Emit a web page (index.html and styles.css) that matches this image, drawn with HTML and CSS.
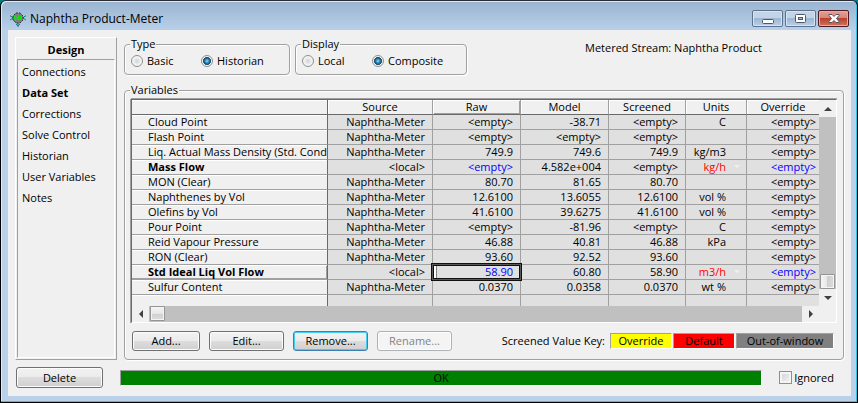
FILE: index.html
```html
<!DOCTYPE html>
<html lang="en">
<head>
<meta charset="utf-8">
<title>Naphtha Product-Meter</title>
<link rel="stylesheet" href="styles.css">
</head>
<body>
<div class="window">
  <header class="titlebar">
    <svg class="app-icon" width="16" height="16" viewBox="0 0 16 16" aria-hidden="true">
      <path d="M0 5h1l2 2h10l2-2h1M0 9l3-2M16 9l-3-2M8 12v4M6 13l2 2 2-2" fill="none" stroke="#108080"/>
      <path d="M6 2h4l3 3v4l-3 3H6L3 9V5z" fill="#808080" stroke="#303030" stroke-dasharray="2 1"/>
      <path d="M4 5h2v4H4zM7 5h2v4H7zM10 5h2v4h-2z" fill="#10e010"/>
      <path d="M5 7h6" stroke="#10e010"/>
    </svg>
    <h1 class="title">Naphtha Product-Meter</h1>
    <div class="controls">
      <button class="control" type="button" aria-label="Minimize">
        <svg width="12" height="11" viewBox="0 0 12 11"><rect x="0.500" y="6.500" width="11" height="4" rx="1" fill="#fff" stroke="#535666"/></svg>
      </button>
      <button class="control" type="button" aria-label="Maximize">
        <svg width="12" height="11" viewBox="0 0 12 11"><rect x="0.500" y="1.500" width="10" height="8" rx="1" fill="#fff" stroke="#535666"/><rect x="3.500" y="4.500" width="4" height="2" fill="#a9bfd8" stroke="#535666"/></svg>
      </button>
      <button class="control control-close" type="button" aria-label="Close">
        <svg width="12" height="11" viewBox="0 0 12 11"><path d="M1 1.500h3l2 2 2-2h3v1L8.500 5.500 11 8.500v1H8l-2-2-2 2H1v-1l2.500-3L1 2.500z" fill="#fff" stroke="#535666"/></svg>
      </button>
    </div>
  </header>

  <main class="content">
    <div class="workspace">
      <nav class="sidebar">
        <h2 class="sidebar-title">Design</h2>
        <div class="sidebar-list">
          <a href="#">Connections</a>
          <a href="#" class="current">Data Set</a>
          <a href="#">Corrections</a>
          <a href="#">Solve Control</a>
          <a href="#">Historian</a>
          <a href="#">User Variables</a>
          <a href="#">Notes</a>
        </div>
      </nav>

      <div class="page">
        <div class="options">
          <fieldset class="group choices">
            <legend>Type</legend>
            <label><input type="radio" name="type">Basic</label>
            <label><input type="radio" name="type" checked>Historian</label>
          </fieldset>
          <fieldset class="group choices choices-display">
            <legend>Display</legend>
            <label><input type="radio" name="display">Local</label>
            <label><input type="radio" name="display" checked>Composite</label>
          </fieldset>
          <p class="stream">Metered Stream: Naphtha Product</p>
        </div>

        <fieldset class="group variables">
          <legend>Variables</legend>
          <div class="grid">
            <div class="grid-view">
              <table>
                <colgroup><col><col class="c-source"><col class="c-value"><col class="c-value"><col class="c-screened"><col class="c-units"><col class="c-override"></colgroup>
                <thead>
                  <tr><th></th><th>Source</th><th class="raised">Raw</th><th>Model</th><th>Screened</th><th>Units</th><th>Override</th></tr>
                </thead>
                <tbody>
                  <tr><th>Cloud Point</th><td>Naphtha-Meter</td><td>&lt;empty&gt;</td><td>-38.71</td><td>&lt;empty&gt;</td><td>C</td><td>&lt;empty&gt;</td></tr>
                  <tr><th>Flash Point</th><td>Naphtha-Meter</td><td>&lt;empty&gt;</td><td>&lt;empty&gt;</td><td>&lt;empty&gt;</td><td></td><td>&lt;empty&gt;</td></tr>
                  <tr><th>Liq. Actual Mass Density (Std. Cond</th><td>Naphtha-Meter</td><td>749.9</td><td>749.6</td><td>749.9</td><td>kg/m3</td><td>&lt;empty&gt;</td></tr>
                  <tr><th class="key">Mass Flow</th><td>&lt;local&gt;</td><td class="editable">&lt;empty&gt;</td><td>4.582e+004</td><td>&lt;empty&gt;</td><td class="unit-choice">kg/h</td><td class="editable">&lt;empty&gt;</td></tr>
                  <tr><th>MON (Clear)</th><td>Naphtha-Meter</td><td>80.70</td><td>81.65</td><td>80.70</td><td></td><td>&lt;empty&gt;</td></tr>
                  <tr><th>Naphthenes by Vol</th><td>Naphtha-Meter</td><td>12.6100</td><td>13.6055</td><td>12.6100</td><td>vol %</td><td>&lt;empty&gt;</td></tr>
                  <tr><th>Olefins by Vol</th><td>Naphtha-Meter</td><td>41.6100</td><td>39.6275</td><td>41.6100</td><td>vol %</td><td>&lt;empty&gt;</td></tr>
                  <tr><th>Pour Point</th><td>Naphtha-Meter</td><td>&lt;empty&gt;</td><td>-81.96</td><td>&lt;empty&gt;</td><td>C</td><td>&lt;empty&gt;</td></tr>
                  <tr><th>Reid Vapour Pressure</th><td>Naphtha-Meter</td><td>46.88</td><td>40.81</td><td>46.88</td><td>kPa</td><td>&lt;empty&gt;</td></tr>
                  <tr><th>RON (Clear)</th><td>Naphtha-Meter</td><td>93.60</td><td>92.52</td><td>93.60</td><td></td><td>&lt;empty&gt;</td></tr>
                  <tr><th class="key raised">Std Ideal Liq Vol Flow</th><td>&lt;local&gt;</td><td class="selected"><input type="text" value="58.90" aria-label="Std Ideal Liq Vol Flow, Raw"></td><td>60.80</td><td>58.90</td><td class="unit-choice">m3/h</td><td class="editable">&lt;empty&gt;</td></tr>
                  <tr><th>Sulfur Content</th><td>Naphtha-Meter</td><td>0.0370</td><td>0.0358</td><td>0.0370</td><td>wt %</td><td>&lt;empty&gt;</td></tr>
                  <tr><th></th><td></td><td></td><td></td><td></td><td></td><td></td></tr>
                </tbody>
              </table>
            </div>
            <div class="scroll scroll-y">
              <button type="button" class="arrow" aria-label="Scroll up"><svg width="8" height="4" viewBox="0 0 8 4"><path d="M0 4l4-4 4 4z"/></svg></button>
              <div class="track"><div class="thumb"></div></div>
              <button type="button" class="arrow" aria-label="Scroll down"><svg width="8" height="4" viewBox="0 0 8 4"><path d="M0 0l4 4 4-4z"/></svg></button>
            </div>
            <div class="scroll scroll-x">
              <button type="button" class="arrow" aria-label="Scroll left"><svg width="4" height="8" viewBox="0 0 4 8"><path d="M4 0L0 4l4 4z"/></svg></button>
              <div class="track"><div class="thumb"></div></div>
              <button type="button" class="arrow" aria-label="Scroll right"><svg width="4" height="8" viewBox="0 0 4 8"><path d="M0 0l4 4-4 4z"/></svg></button>
            </div>
            <div class="corner"></div>
          </div>

          <div class="actions">
            <button type="button" class="button button-add">Add...</button>
            <button type="button" class="button">Edit...</button>
            <button type="button" class="button button-default">Remove...</button>
            <button type="button" class="button" disabled>Rename...</button>
            <div class="legend-key">
              <span class="key-label">Screened Value Key:</span>
              <span class="swatch swatch-override">Override</span>
              <span class="swatch swatch-default">Default</span>
              <span class="swatch swatch-out">Out-of-window</span>
            </div>
          </div>
        </fieldset>
      </div>
    </div>

    <footer class="footer">
      <button type="button" class="button button-delete">Delete</button>
      <div class="status" role="status">OK</div>
      <label class="ignored"><input type="checkbox">Ignored</label>
    </footer>
  </main>
</div>
</body>
</html>
```
FILE: styles.css
```css
* {
  box-sizing: border-box;
}

body {
  margin: 0;
  background: #008080;
  color: #000;
  font: 11px/14px "Open Sans", "Noto Sans", sans-serif;
}

h1, h2, p {
  margin: 0;
}

button, input {
  font: inherit;
  color: inherit;
}

.window {
  display: flex;
  flex-direction: column;
  min-height: 100vh;
  padding: 0 6px 6px;
  border: 1px solid #000;
  border-top-color: #2b2b33;
  border-radius: 6px 6px 0 0;
  background: linear-gradient(#99b4d1, #b9d1ea 30px);
  box-shadow: inset -1px -1px 0 #35c3e6, inset 1px 1px 0 #dfe9f5;
}

/* Title bar */
.titlebar {
  display: flex;
  align-items: center;
  height: 29px;
  padding: 6px 2px 0 3px;
}

.title {
  flex: 1;
  margin-left: 4px;
  font-size: 12px;
  line-height: 16px;
  font-weight: 400;
}

.controls {
  display: flex;
  gap: 2px;
}

.control {
  display: flex;
  align-items: center;
  justify-content: center;
  width: 31px;
  height: 17px;
  padding: 0;
  border: 1px solid #5c7390;
  border-radius: 2px;
  background: linear-gradient(#c3d4e7 50%, #9db6d2 50%, #b8cfe8);
  box-shadow: inset 0 0 0 1px #d6e3f1;
}

.control-close {
  border-color: #4f1a22;
  background: linear-gradient(#e0a095, #d68476 50%, #b8412b 50%, #d4735c);
  box-shadow: inset 0 0 0 1px #e6aea3;
}

/* Client area */
.content {
  display: flex;
  flex: 1;
  flex-direction: column;
  margin-left: 1px;
  padding: 7px 7px 8px;
  background: #f0f0f0;
}

.workspace {
  display: flex;
  flex: 1;
  gap: 7px;
}

.sidebar {
  display: flex;
  flex-direction: column;
  width: 102px;
  padding: 5px 1px 1px;
  border: 1px solid;
  border-color: #fff #a0a0a0 #a0a0a0 #fff;
}

.sidebar-title {
  padding-bottom: 2px;
  font-size: 11px;
  line-height: 14px;
  text-align: center;
}

.sidebar-list {
  display: flex;
  flex: 1;
  flex-direction: column;
  gap: 7px;
  padding: 5px 4px;
  border: 1px solid;
  border-color: #a0a0a0 #fff #fff #a0a0a0;
}

.sidebar-list a {
  color: #000;
  text-decoration: none;
}

.sidebar-list .current {
  font-weight: 700;
}

.page {
  display: flex;
  flex: 1;
  flex-direction: column;
  min-width: 0;
}

.group {
  min-width: 0;
  margin: 0;
  border: 1px solid #a0a0a0;
  border-radius: 4px;
  box-shadow: 1px 1px 0 #fff, inset 1px 1px 0 #fff;
}

.group legend {
  margin-left: 5px;
  padding: 0 1px;
  background: #f0f0f0;
}

.options {
  display: flex;
  gap: 5px;
  height: 38px;
}

.choices {
  display: grid;
  grid-template-columns: 70px 1fr;
  width: 166px;
  padding: 3px 0 6px 6px;
}

.choices-display {
  width: 172px;
}

.choices legend {
  margin-left: -1px;
}

.choices label,
.ignored {
  display: flex;
  align-items: center;
  gap: 4px;
}

.choices input {
  width: 12px;
  height: 12px;
  margin: 0;
  border: 1px solid #8e8f8f;
  border-radius: 50%;
  background: radial-gradient(circle, #d0d4d8, #f4f4f4 60%);
  box-shadow: inset 0 0 0 1px #f4f4f4;
  appearance: none;
}

.choices input:checked {
  background: radial-gradient(circle, #9adcf4 0, #2a86b8 2px, #0c3552 4px, #f4f4f4 4px);
}

.stream {
  margin-left: auto;
  padding: 4px 82px 0 0;
}

/* Variables table */
.variables {
  display: flex;
  flex: 1;
  flex-direction: column;
  margin-top: 8px;
  padding: 2px 6px 5px;
}

.variables legend {
  margin-left: -1px;
}

.grid {
  display: grid;
  grid-template-columns: minmax(0, 1fr) 17px;
  grid-template-rows: 206px 16px;
  border: 1px solid;
  border-color: #696969 #fff #fff #696969;
  box-shadow: 0 -1px 0 #a0a0a0, -1px 0 0 #a0a0a0;
}

.grid-view {
  overflow: hidden;
}

table {
  width: 100%;
  border-collapse: separate;
  border-spacing: 0;
  table-layout: fixed;
}

.c-source { width: 105px; }
.c-value { width: 88px; }
.c-screened { width: 77px; }
.c-units { width: 61px; }
.c-override { width: 72px; }

th, td {
  height: 15px;
  padding: 0 7px 0 0;
  border-right: 1px solid #a0a0a0;
  border-bottom: 1px solid #a0a0a0;
  font-weight: 400;
  line-height: 14px;
  white-space: nowrap;
}

td {
  background: #e0e0e0;
  text-align: right;
}

thead th {
  padding: 0;
  border-bottom-color: #696969;
  box-shadow: inset 1px 1px 0 #fff;
  text-align: center;
}

thead .raised {
  box-shadow: inset 1px 1px 0 #fff, inset -1px -1px 0 #a0a0a0;
}

th:first-child {
  overflow: hidden;
  padding: 0 0 0 16px;
  border-right-color: #696969;
  box-shadow: inset 0 1px 0 #fff;
  text-align: left;
}

tbody .raised:first-child {
  box-shadow: inset 0 1px 0 #fff, inset -1px -1px 0 #a0a0a0;
}

.key {
  font-weight: 700;
}

td:nth-child(6) {
  padding-right: 20px;
}

td:last-child {
  padding-right: 3px;
}

td:last-child,
thead th:last-child {
  border-right: 0;
}

.editable,
.selected {
  color: #00f;
}

.unit-choice {
  position: relative;
  color: #f00;
}

.unit-choice::after {
  position: absolute;
  top: 5px;
  right: 6px;
  border: 3px solid transparent;
  border-top-color: #f0f0f0;
  content: "";
}

.selected {
  position: relative;
  padding: 0;
}

.selected::before {
  position: absolute;
  inset: -2px;
  border: 1px solid #101010;
  outline: 1px solid #101010;
  outline-offset: -3px;
  box-shadow: inset 0 0 0 1px #585858;
  content: "";
  pointer-events: none;
}

.selected input {
  display: block;
  width: 100%;
  height: 14px;
  padding: 0 7px 0 0;
  border: 0;
  background: linear-gradient(90deg, #fff 3px, #808080 3px, #808080 4px, transparent 4px);
  text-align: right;
}

/* Scroll bars */
.scroll {
  display: flex;
  background: #c0c0c0;
}

.scroll-y {
  flex-direction: column;
}

.arrow {
  display: flex;
  align-items: center;
  justify-content: center;
  width: 17px;
  height: 17px;
  padding: 0;
  border: 0;
  background: #f0f0f0;
  fill: #404040;
}

.scroll-x .arrow {
  height: 16px;
}

.track {
  display: flex;
  flex: 1;
}

.scroll-y .track {
  align-items: flex-end;
  justify-content: center;
}

.thumb {
  width: 15px;
  height: 15px;
  border: 1px solid #959595;
  border-radius: 1px;
  background: linear-gradient(#f5f5f5, #e6e6e8 50%, #cfcfd2 50%, #dcdcdf);
  box-shadow: inset 0 0 0 1px #f4f4f4;
}

.scroll-y .thumb {
  background: linear-gradient(90deg, #f5f5f5, #e6e6e8 50%, #cfcfd2 50%, #dcdcdf);
}

.scroll-x .thumb {
  margin-left: 1px;
}

.corner {
  background: #f0f0f0;
}

/* Buttons */
.actions {
  display: flex;
  align-items: center;
  gap: 9px;
  margin-top: 8px;
  padding-left: 1px;
}

.button {
  width: 75px;
  height: 20px;
  padding: 0;
  border: 1px solid #707070;
  border-radius: 3px;
  background: linear-gradient(#f2f2f2, #ebebeb 50%, #dddddd 50%, #cfcfcf);
  box-shadow: inset 0 0 0 1px #fcfcfc;
  line-height: 16px;
}

.button-add {
  width: 68px;
}

.button-default {
  border-color: #3c7fb1;
  box-shadow: inset 0 0 0 1px #48cdf4;
}

.button:disabled {
  border-color: #adb2b5;
  background: #f4f4f4;
  color: #838383;
}

.legend-key {
  display: flex;
  align-items: center;
  gap: 1px;
  margin-left: auto;
  padding-right: 3px;
}

.key-label {
  margin-right: 4px;
}

.swatch {
  width: 62px;
  border: 1px solid;
  border-color: #a0a0a0 #fff #fff #a0a0a0;
  text-align: center;
}

.swatch-override { background: #ff0; }
.swatch-default { background: #f00; }

.swatch-out {
  width: 98px;
  background: #808080;
}

/* Footer */
.footer {
  display: flex;
  align-items: center;
  margin-top: 7px;
}

.button-delete {
  width: 87px;
  height: 21px;
  margin: 0 17px 0 1px;
}

.status {
  flex: 1;
  height: 16px;
  border: 1px solid;
  border-color: #a0a0a0 #fff #fff #a0a0a0;
  background: #008000;
  text-align: center;
}

.ignored {
  gap: 2px;
  margin-left: 17px;
  padding-right: 10px;
}

.ignored input {
  width: 13px;
  height: 13px;
  margin: 0;
  border: 1px solid #8e8f8f;
  background: linear-gradient(135deg, #cbcfd5, #f6f6f6);
  box-shadow: inset 0 0 0 2px #f4f4f4;
  appearance: none;
}
```
